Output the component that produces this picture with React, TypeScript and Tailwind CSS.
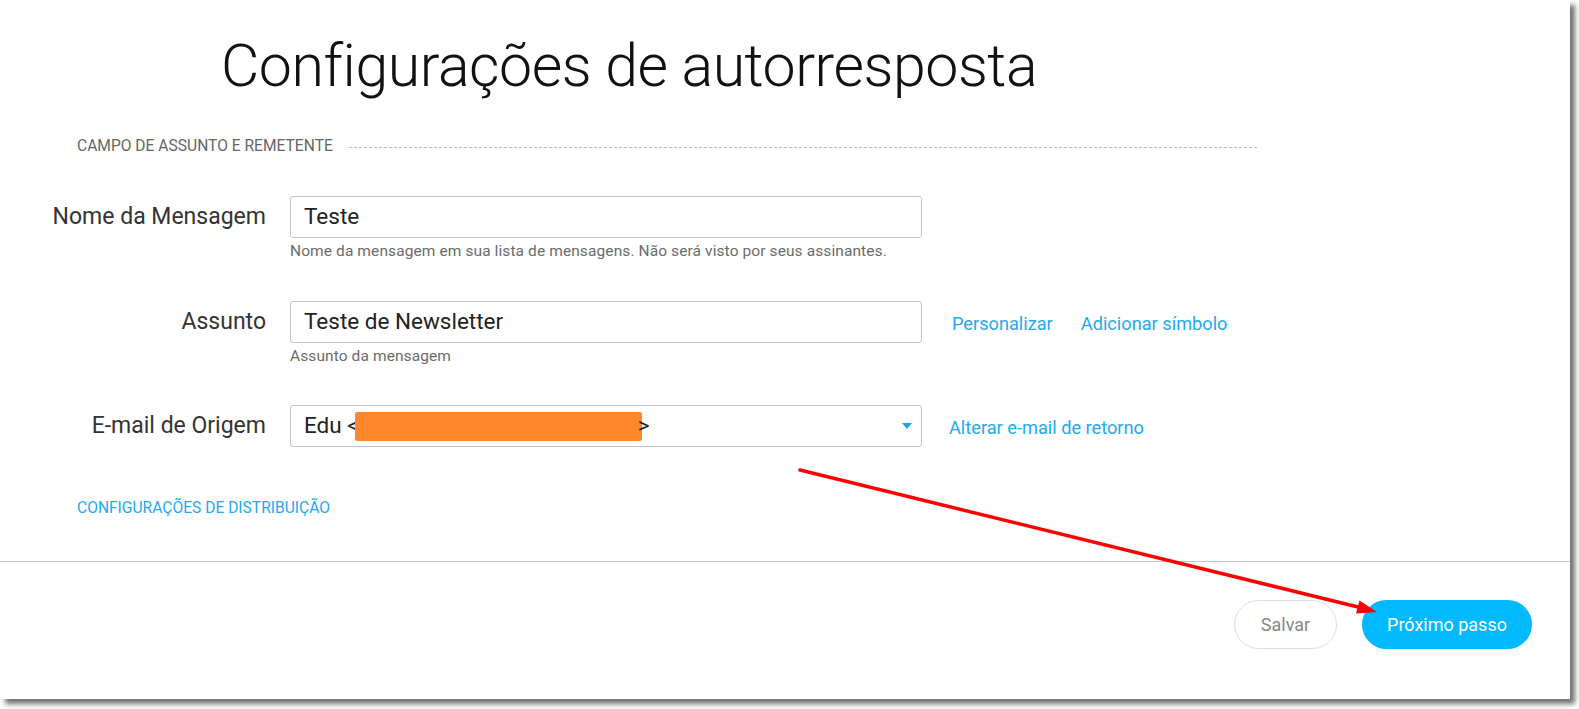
import React from "react";

type FieldRowProps = {
  label: string;
  children: React.ReactNode;
  hint?: string;
  aside?: React.ReactNode;
};

const FieldRow: React.FC<FieldRowProps> = ({ label, children, hint, aside }) => {
  return (
    <div className="flex flex-col">
      <div className="flex items-center">
        <label className="w-[266px] shrink-0 text-right text-[23px] text-[#333]">{label}</label>
        <div className="ml-[24px] w-[632px] shrink-0">{children}</div>
        {aside}
      </div>
      {hint && (
        <p className="ml-[290px] mt-[3px] text-[15.5px] leading-[20px] tracking-[0.1px] text-[#6b6b6b]">{hint}</p>
      )}
    </div>
  );
};

const Arrow = () => (
  <svg className="pointer-events-none absolute left-0 top-0" width="1570" height="699">
    <line x1="800" y1="470" x2="1360" y2="607.5" stroke="#ff0000" strokeWidth="3.5" strokeLinecap="round" />
    <polygon points="1377,612 1356,613.5 1359.5,600.5" fill="#ff0000" />
  </svg>
);

export default function App() {
  return (
    <div className="min-h-screen bg-white font-['Roboto',sans-serif]">
      <div className="relative flex h-[699px] w-[1570px] flex-col bg-white shadow-[5px_5px_5px_rgba(0,0,0,0.55)]">
        <div className="h-[562px] border-b border-[#c8c8c8]">
          <h1 className="ml-[221px] mt-[36px] h-[60px] text-[59px] font-light leading-[60px] tracking-[-0.45px] text-[#111]">
            Configurações de autorresposta
          </h1>

          <div className="ml-[77px] mt-[41px] flex h-[20px] w-[1180px] items-center gap-4">
            <span className="text-[15.6px] uppercase text-[#666]">Campo de assunto e remetente</span>
            <div className="flex-1 border-t border-dashed border-[#bdbdbd]" />
          </div>

          <div className="mt-[39px] flex flex-col gap-[40px]">
            <FieldRow
              label="Nome da Mensagem"
              hint="Nome da mensagem em sua lista de mensagens. Não será visto por seus assinantes."
            >
              <div className="flex h-[42px] items-center rounded-[3px] border border-[#c4c4c4] px-[13px] text-[22.5px] text-[#222]">
                Teste
              </div>
            </FieldRow>

            <FieldRow
              label="Assunto"
              hint="Assunto da mensagem"
              aside={
                <div className="ml-[30px] flex items-center gap-[28px] pt-[4px] text-[18.2px] text-[#1fa9ef]">
                  <a>Personalizar</a>
                  <a>Adicionar símbolo</a>
                </div>
              }
            >
              <div className="flex h-[42px] items-center rounded-[3px] border border-[#c4c4c4] px-[13px] text-[22.5px] text-[#222]">
                Teste de Newsletter
              </div>
            </FieldRow>
          </div>

          <div className="mt-[39px]">
            <FieldRow
              label="E-mail de Origem"
              aside={
                <a className="ml-[27px] pt-[4px] text-[18.2px] text-[#1fa9ef]">Alterar e-mail de retorno</a>
              }
            >
              <div className="flex h-[42px] items-center justify-between rounded-[3px] border border-[#c4c4c4] pl-[13px] pr-[9px] text-[22.5px] text-[#222]">
                <div className="flex items-center whitespace-nowrap">
                  <span>Edu &lt;</span>
                  <span className="ml-[-4px] inline-block h-[29px] w-[287px] rounded-[2px] bg-[#ff862b]" />
                  <span className="ml-[-4px]">&gt;</span>
                </div>
                <svg width="10" height="6" viewBox="0 0 10 6">
                  <polygon points="0,0 10,0 5,6" fill="#1ba3e6" />
                </svg>
              </div>
            </FieldRow>
          </div>

          <a className="ml-[77px] mt-[51px] block text-[15.6px] uppercase leading-[20px] text-[#1fa9ef]">
            Configurações de distribuição
          </a>
        </div>

        <div className="flex justify-end gap-[25px] pr-[38px] pt-[38px]">
          <button className="h-[49px] w-[103px] rounded-full border border-[#dedede] bg-white text-[18px] text-[#888]">
            Salvar
          </button>
          <button className="h-[49px] w-[170px] rounded-full bg-[#00b9ff] text-[18px] text-white">
            Próximo passo
          </button>
        </div>

        <Arrow />
      </div>
    </div>
  );
}
